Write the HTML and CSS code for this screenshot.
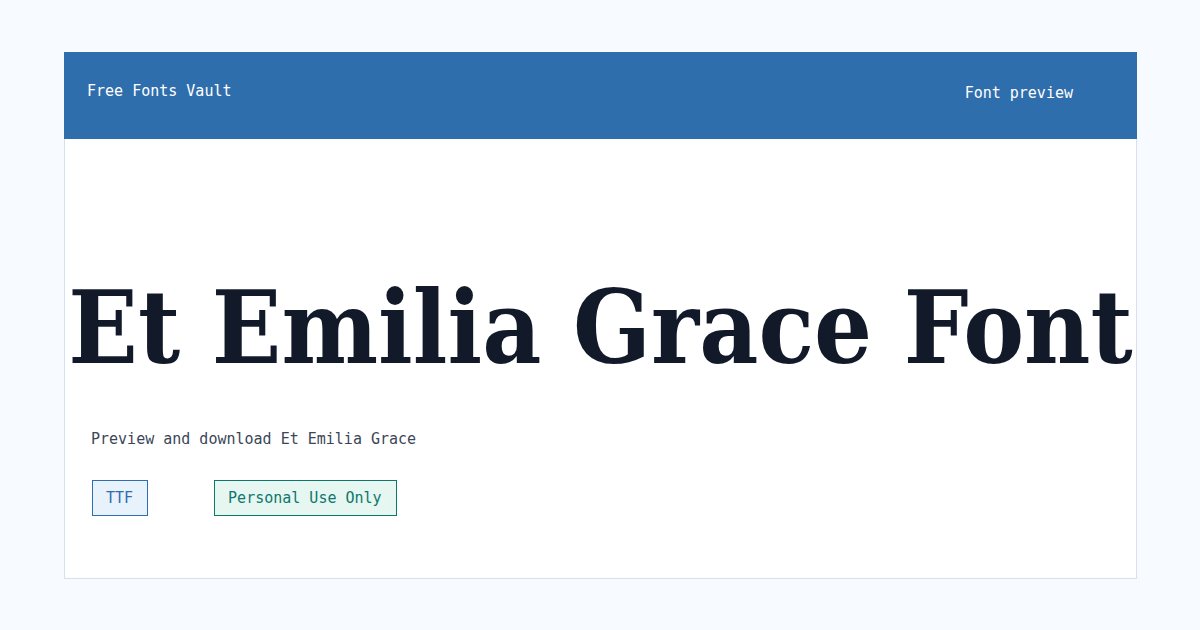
FILE: index.html
```html
<!DOCTYPE html>
<html lang="en">
<head>
  <meta charset="UTF-8">
  <meta name="viewport" content="width=device-width, initial-scale=1.0">
  <title>Et Emilia Grace Font</title>
  <link rel="stylesheet" href="styles.css">
</head>
<body>
  <div class="card">
    <header class="site-header">
      <div class="brand">Free Fonts Vault</div>
      <div class="nav">Font preview</div>
    </header>
    <main class="preview">
      <h1 class="font-title">Et Emilia Grace Font</h1>
      <p class="lead">Preview and download Et Emilia Grace</p>
      <div class="tags">
        <span class="tag tag-format">TTF</span>
        <span class="tag tag-license">Personal Use Only</span>
      </div>
    </main>
  </div>
</body>
</html>
```

FILE: styles.css
```css
body {
  margin: 0;
  padding: 52px 0 0 64px;
  background-color: #f7fafe;
  font-family: "DejaVu Sans Mono", monospace;
  font-size: 15px;
}
.card {
  width: 1073px;
  background-color: white;
}
.site-header {
  display: flex;
  justify-content: space-between;
  align-items: flex-start;
  height: 87px;
  box-sizing: border-box;
  padding: 30px 64px 0 23px;
  background-color: #2f6ead;
  color: white;
}
.nav {
  margin-top: 2px;
}
.preview {
  height: 440px;
  box-sizing: border-box;
  border: 1px solid #d6e0ee;
  border-top: none;
  padding: 138px 0 0 0;
}
.font-title {
  margin: 0;
  font-family: "DejaVu Serif", serif;
  font-stretch: condensed;
  font-weight: bold;
  font-size: 101.5px;
  line-height: 1;
  color: #121a2a;
  white-space: nowrap;
  text-align: center;
}
.lead {
  margin: 51px 0 0 26px;
  color: #3b4658;
}
.tags {
  display: flex;
  gap: 66px;
  margin: 32px 0 0 27px;
}
.tag {
  padding: 8px 14px 8px 13px;
  line-height: 18px;
  border: 1px solid;
}
.tag-format {
  background-color: #e8f2fc;
  border-color: #2f6ead;
  color: #2f6ead;
}
.tag-license {
  background-color: #e6f6f1;
  border-color: #0f766e;
  color: #0f766e;
}
```
